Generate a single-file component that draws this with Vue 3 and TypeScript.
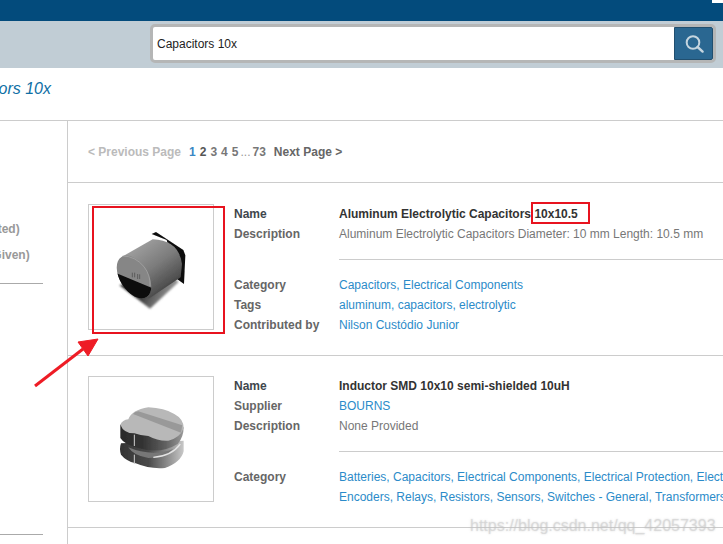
<template>
  <div class="page">
    <div class="topbar"><span class="topbar-notch"></span></div>

    <div class="searchband">
      <form class="searchbox" @submit.prevent>
        <input v-model="query" class="searchinput" />
        <button class="searchbtn" type="submit" aria-label="Search">
          <svg width="22" height="22" viewBox="0 0 22 22">
            <circle cx="10" cy="9.5" r="6.3" fill="none" stroke="#c5d5df" stroke-width="2" />
            <path d="M14.6 14 L19.6 18.6" stroke="#c5d5df" stroke-width="2.4" stroke-linecap="round" />
          </svg>
        </button>
      </form>
    </div>

    <div class="heading"><em>Search Results for Capacitors 10x</em></div>

    <div class="content">
      <aside class="sidebar">
        <div class="side-group">
          <div class="side-item">(Not Rated)</div>
          <div class="side-item">(None Given)</div>
        </div>
        <div class="side-rule"></div>
        <div class="side-spacer"></div>
        <div class="side-rule"></div>
      </aside>

      <main class="results">
        <div class="pager">
          <span class="pager-off">&lt; Previous Page</span>
          <span class="pager-nums">
            <a class="current">1</a>
            <a class="dark">2</a>
            <a>3</a>
            <a>4</a>
            <a>5</a>
            <i>...</i>
            <a>73</a>
          </span>
          <a class="pager-next">Next Page &gt;</a>
        </div>

        <article class="card card-first">
          <div class="thumb">
            <svg viewBox="0 0 372 372" width="124" height="124">
              <defs>
                <filter id="soft" x="-10%" y="-10%" width="120%" height="120%"><feGaussianBlur stdDeviation="1.8" /></filter>
                <filter id="softer" x="-10%" y="-10%" width="120%" height="120%"><feGaussianBlur stdDeviation="3" /></filter>
                <linearGradient id="capBody" x1="0.3" y1="0.1" x2="0.85" y2="0.85">
                  <stop offset="0" stop-color="#9c9c9c" />
                  <stop offset="0.45" stop-color="#7c7c7c" />
                  <stop offset="0.85" stop-color="#505050" />
                  <stop offset="1" stop-color="#333" />
                </linearGradient>
                <linearGradient id="capShadow" x1="0" y1="0" x2="1" y2="0.3">
                  <stop offset="0" stop-color="#111" />
                  <stop offset="0.55" stop-color="#444" />
                  <stop offset="1" stop-color="#a0a0a0" />
                </linearGradient>
                <clipPath id="capFace">
                  <ellipse cx="102" cy="171" rx="42" ry="71" transform="rotate(-32 102 171)" />
                </clipPath>
              </defs>
              <g transform="translate(33 45)">
                <path d="M58 195 L150 266 L236 186 L215 168 L120 190 Z" fill="url(#capShadow)" filter="url(#softer)" />
                <g filter="url(#soft)">
                  <path d="M155 42 L168 36 L250 90 L256 106 L252 192 L232 178 L200 60 Z" fill="#0c0c0c" />
                  <path d="M66 110 L158 58 Q 236 60 246 132 L 242 172 L 146 236 Z" fill="url(#capBody)" />
                  <g clip-path="url(#capFace)">
                    <rect x="40" y="90" width="130" height="160" fill="#868686" />
                    <path d="M40 156 L160 206 V250 H40 Z" fill="#0a0a0a" />
                  </g>
                  <path d="M68 108 Q 105 108 132 140 Q 152 166 150 198" fill="none" stroke="#aaa" stroke-width="2" />
                  <path d="M97 158 v14 M104 158 v14 M113 162 v15 M119 163 v14" stroke="#5c5c5c" stroke-width="3" />
                </g>
              </g>
            </svg>
          </div>
          <div class="details">
            <dl class="rows">
              <dt class="strong">Name</dt>
              <dd class="title">Aluminum Electrolytic Capacitors 10x10.5</dd>
              <dt>Description</dt>
              <dd>Aluminum Electrolytic Capacitors Diameter: 10 mm Length: 10.5 mm</dd>
            </dl>
            <div class="divider"></div>
            <dl class="rows">
              <dt>Category</dt>
              <dd><a>Capacitors, Electrical Components</a></dd>
              <dt>Tags</dt>
              <dd><a>aluminum, capacitors, electrolytic</a></dd>
              <dt>Contributed by</dt>
              <dd><a>Nilson Custódio Junior</a></dd>
            </dl>
          </div>
        </article>

        <article class="card">
          <div class="thumb">
            <svg viewBox="0 0 372 372" width="124" height="124">
              <defs>
                <linearGradient id="indBody" x1="0" y1="0" x2="1" y2="0">
                  <stop offset="0" stop-color="#2a2a2a" />
                  <stop offset="0.35" stop-color="#333" />
                  <stop offset="0.7" stop-color="#5e5e5e" />
                  <stop offset="1" stop-color="#9a9a9a" />
                </linearGradient>
                <linearGradient id="indBase" x1="0" y1="0" x2="1" y2="0">
                  <stop offset="0" stop-color="#333" />
                  <stop offset="0.45" stop-color="#4a4a4a" />
                  <stop offset="0.8" stop-color="#999" />
                  <stop offset="1" stop-color="#c8c8c8" />
                </linearGradient>
              </defs>
              <g transform="translate(48 51)" filter="url(#soft)">
                <path d="M48 148 Q 42 165 48 182 Q 62 200 92 208 Q 135 226 180 222 Q 228 205 236 172 L236 140 Z" fill="url(#indBase)" />
                <path d="M70 160 Q 140 190 205 165 Q 180 192 130 192 Q 85 185 70 160 Z" fill="#777" />
                <path d="M145 190 Q 200 186 226 150" fill="none" stroke="#e4e4e4" stroke-width="4" />
                <path d="M46 92 L46 132 Q 58 152 100 162 Q 165 182 218 150 Q 236 130 236 100 Z" fill="url(#indBody)" />
                <path d="M46 92 Q 52 78 70 76 Q 80 48 130 40 Q 178 42 208 60 Q 236 75 236 102 Q 225 132 190 140 Q 160 142 130 126 Q 105 125 88 118 Q 56 118 46 92 Z" fill="#b8b8b8" />
                <path d="M84 60 Q 90 52 100 52 L232 94 L228 116 Z" fill="#999" />
                <path d="M88 122 V156 M88 182 V210" stroke="#cfcfcf" stroke-width="3" />
              </g>
            </svg>
          </div>
          <div class="details">
            <dl class="rows">
              <dt class="strong">Name</dt>
              <dd class="title">Inductor SMD 10x10 semi-shielded 10uH</dd>
              <dt>Supplier</dt>
              <dd><a>BOURNS</a></dd>
              <dt>Description</dt>
              <dd>None Provided</dd>
            </dl>
            <div class="divider"></div>
            <dl class="rows">
              <dt>Category</dt>
              <dd>
                <a v-for="line in categoryLines" :key="line" class="catline">{{ line }}</a>
              </dd>
            </dl>
          </div>
        </article>
      </main>
    </div>

    <!-- annotations drawn on top of the screenshot -->
    <div class="mark mark-thumb"></div>
    <div class="mark mark-title"></div>
    <svg class="arrow" width="80" height="60" viewBox="0 0 80 60">
      <path d="M2 49 L50 12" stroke="#ee1c25" stroke-width="3" />
      <path d="M65 2 L45 5 L55 19 Z" fill="#ee1c25" stroke="#ee1c25" stroke-width="1" />
    </svg>
    <div class="watermark">https://blog.csdn.net/qq_42057393</div>
  </div>
</template>

<script setup lang="ts">
import { ref } from 'vue'

const query = ref<string>('Capacitors 10x')

const categoryLines: string[] = [
  'Batteries, Capacitors, Electrical Components, Electrical Protection, Electromechanical,',
  'Encoders, Relays, Resistors, Sensors, Switches - General, Transformers'
]
</script>

<style>
html,
body {
  margin: 0;
  overflow: hidden;
  background: #fff;
}
</style>

<style scoped>
.page {
  position: relative;
  width: 723px;
  height: 544px;
  overflow: hidden;
  font-family: "Liberation Sans", Arial, sans-serif;
  font-size: 12px;
  color: #777;
}

.topbar {
  position: relative;
  height: 21px;
  background: #034b7c;
}

.topbar-notch {
  position: absolute;
  top: 0;
  right: 0;
  width: 11px;
  height: 3px;
  background: #fff;
}

.searchband {
  display: flex;
  justify-content: flex-end;
  height: 47px;
  padding: 3px 7px 0 0;
  box-sizing: border-box;
  background: #c1cdd5;
}

.searchbox {
  display: flex;
  width: 566px;
  height: 39px;
  box-sizing: border-box;
  border: 3px solid #b5b6b6;
  border-radius: 5px;
  background: #fff;
}

.searchinput {
  flex: 1;
  min-width: 0;
  border: none;
  outline: none;
  padding: 0 0 0 4px;
  font: 12px "Liberation Sans", Arial, sans-serif;
  color: #222;
  background: transparent;
}

.searchbtn {
  display: flex;
  align-items: center;
  justify-content: center;
  width: 39px;
  padding: 0;
  border: 1px solid #214f6f;
  border-radius: 0 2px 2px 0;
  background: #2a6791;
}

.heading {
  display: flex;
  justify-content: flex-end;
  width: 51px;
  height: 52px;
  padding-top: 12px;
  box-sizing: border-box;
  font-size: 16px;
  line-height: 18px;
  white-space: nowrap;
  color: #0f6fa5;
}

.content {
  display: flex;
  height: 424px;
  border-top: 1px solid #ccc;
}

.sidebar {
  width: 68px;
  flex: none;
  box-sizing: border-box;
  border-right: 1px solid #ccc;
  display: flex;
  flex-direction: column;
  padding-right: 24px;
}

.side-group {
  display: flex;
  flex-direction: column;
  align-items: flex-start;
  margin-left: -45px;
  padding-top: 101px;
  gap: 11px;
  height: 162px;
  box-sizing: border-box;
}

.side-item {
  font-weight: bold;
  line-height: 15px;
  white-space: nowrap;
  color: #999;
}

.side-rule {
  height: 1px;
  background: #aaa;
  flex: none;
}

.side-spacer {
  height: 250px;
  flex: none;
}

.results {
  flex: 1;
  min-width: 0;
}

.pager {
  display: flex;
  align-items: center;
  height: 61px;
  padding-left: 20px;
  border-bottom: 1px solid #ccc;
  font-weight: bold;
  white-space: nowrap;
  color: #777;
}

.pager-off {
  color: #bbb;
}

.pager-nums {
  display: flex;
  gap: 4px;
  margin-left: 8px;
}

.pager-nums i {
  font-style: normal;
  font-weight: normal;
  margin: 0 -2px;
  color: #999;
}

.pager-nums .current {
  color: #3a87c5;
}

.pager-nums .dark {
  color: #555;
}

.pager-next {
  margin-left: 8px;
  color: #666;
}

.card {
  display: flex;
  height: 172px;
  box-sizing: border-box;
  padding: 20px 0 0 20px;
  border-bottom: 1px solid #ccc;
}

.card-first {
  height: 173px;
  padding-top: 21px;
}

.thumb {
  flex: none;
  width: 126px;
  height: 126px;
  box-sizing: border-box;
  border: 1px solid #ccc;
}

.thumb svg {
  display: block;
}

.details {
  flex: 1;
  min-width: 0;
  margin-left: 20px;
}

.rows {
  display: grid;
  grid-template-columns: 105px 1fr;
  margin: 0;
  line-height: 20px;
  white-space: nowrap;
}

.rows dt {
  font-weight: bold;
  color: #666;
}

.rows dt.strong {
  color: #40464c;
}

.rows dd {
  margin: 0;
  color: #777;
}

.rows dd.title {
  font-weight: bold;
  color: #333;
}

.rows a {
  color: #2b8bc9;
}

.catline {
  display: block;
}

.divider {
  height: 1px;
  margin: 15px 0 15px 105px;
  background: #ccc;
}

.mark {
  position: absolute;
  box-sizing: border-box;
  border: 2px solid #e8131f;
}

.mark-thumb {
  left: 92px;
  top: 206px;
  width: 133px;
  height: 128px;
}

.mark-title {
  left: 531px;
  top: 202px;
  width: 59px;
  height: 22px;
}

.arrow {
  position: absolute;
  left: 33px;
  top: 337px;
}

.watermark {
  position: absolute;
  left: 470px;
  top: 516px;
  font-size: 16px;
  line-height: 20px;
  white-space: nowrap;
  color: rgba(200, 200, 200, 0.45);
  text-shadow: 0 0 2px rgba(180, 180, 180, 0.55);
}
</style>
